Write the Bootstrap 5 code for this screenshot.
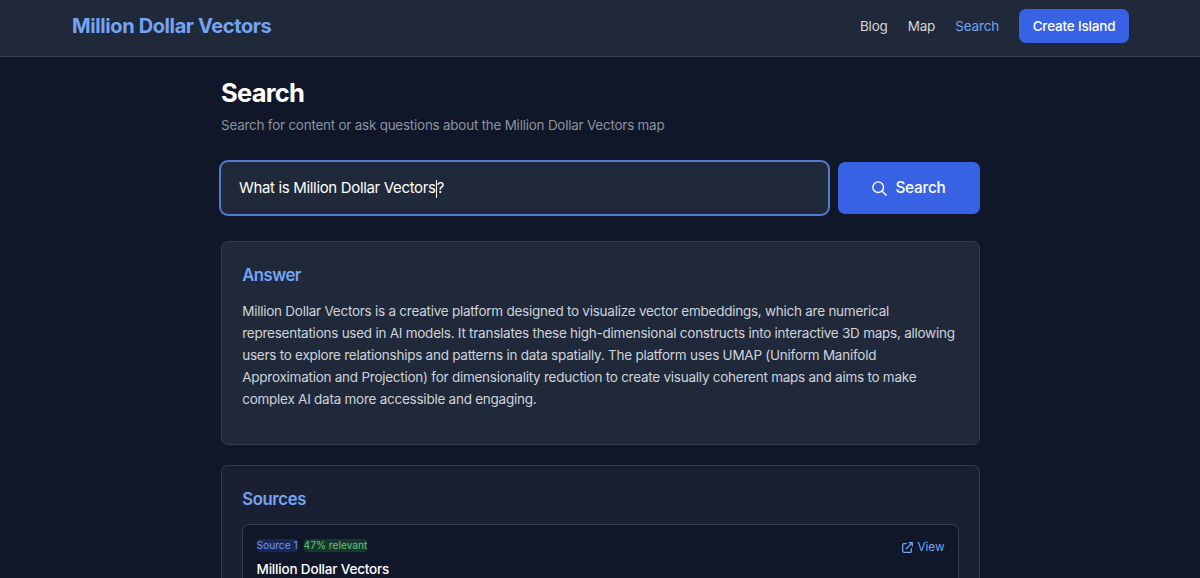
<!DOCTYPE html>
<html lang="en">
<head>
<meta charset="utf-8">
<meta name="viewport" content="width=device-width, initial-scale=1">
<title>Million Dollar Vectors</title>
<link rel="stylesheet" href="https://cdn.jsdelivr.net/npm/bootstrap@5.3.0/dist/css/bootstrap.min.css">
<style>
body{background:#101728;color:#fff;font-family:Inter,"Liberation Sans",sans-serif;height:578px;overflow:hidden;font-size:13.5px}
.topbar{background:#202939;border-bottom:1px solid #374252;height:57px;padding:0 71px 5px 72px}
.brand{font-size:20px;font-weight:700;color:#75a4f4;line-height:30px;letter-spacing:-.39px}
.topbar .nav{gap:20px}
.topbar .nav-link{color:#d1d5db;font-size:13.5px;line-height:20px;padding:0;letter-spacing:-.17px}
.topbar .nav-link.active{color:#75a4f4}
.btn-blue{background:#3762e3;color:#fff;border:0;font-weight:500}
.btn-blue:hover{background:#2c55d0;color:#fff}
.btn-create{width:110px;height:34px;font-size:13.5px;padding:1px 0 0;border-radius:7px;white-space:nowrap;letter-spacing:-.18px}
.page{width:759px}
h1{font-size:25.5px;line-height:32px;font-weight:700;margin:20px 0 6px;letter-spacing:-.75px;padding-left:.5px}
.intro{color:#8b93a3;line-height:20px;margin-bottom:27px;font-size:13.4px;letter-spacing:-.2px;padding-left:.5px}
.query{width:607px;height:52px;background:#202939;border-radius:7px;box-shadow:0 0 0 2px #527bcf;padding:1px 18.5px 0;font-size:15px;white-space:pre;letter-spacing:-.335px}
.caret{width:1px;height:18px;background:#fff}
.btn-search{width:142px;height:52px;border-radius:7px;font-size:15.3px;padding:1px 0 0 1px;letter-spacing:-.2px}
.panel{border:1px solid #343d4d;border-radius:7px;padding:20px}
.answer{background:#202939;height:204px;margin-top:27px}
.sources{background:#1a2031;height:113px;margin-top:20px;border-bottom:0;border-radius:7px 7px 0 0;padding-bottom:0}
h2{font-size:16.7px;line-height:24px;font-weight:600;color:#75a4f4;margin:1px 0 13px;letter-spacing:-.5px;padding-left:.7px}
.sources h2{letter-spacing:-.35px}
.answer p{color:#ced3dc;line-height:22px;white-space:nowrap;margin:0;letter-spacing:-.25px;padding-left:.7px}
.source{background:#101728;border:1px solid #343d4d;border-bottom:0;border-radius:7px 7px 0 0;height:54px;padding:14px 13px 0 14px}
.tag{font-size:10.2px;line-height:13px;border-radius:3px;height:13px;white-space:nowrap}
.tag-blue{background:#182757;color:#6d99ea}
.tag-green{background:#17382f;color:#63c47b}
.tags{gap:6px}
.view{color:#75a4f4;font-size:11.7px;line-height:17px;height:17px;gap:4px;text-decoration:none}
.source-title{font-size:13.5px;line-height:17px;font-weight:500;margin:5px 0 0;letter-spacing:-.18px}
</style>
<script src="https://cdn.jsdelivr.net/npm/bootstrap@5.3.0/dist/js/bootstrap.bundle.min.js"></script>
</head>
<body>
<header class="topbar d-flex align-items-center justify-content-between">
  <a class="brand text-decoration-none" href="#">Million Dollar Vectors</a>
  <nav class="nav align-items-center flex-nowrap">
    <a class="nav-link" href="#">Blog</a>
    <a class="nav-link" href="#">Map</a>
    <a class="nav-link active" href="#">Search</a>
    <a class="btn btn-blue btn-create d-flex align-items-center justify-content-center" href="#">Create Island</a>
  </nav>
</header>
<main class="page mx-auto">
  <h1>Search</h1>
  <p class="intro">Search for content or ask questions about the Million Dollar Vectors map</p>
  <div class="d-flex justify-content-between">
    <div class="query d-flex align-items-center" role="textbox"><span>What is Million Dollar Vectors</span><span class="caret"></span><span>?</span></div>
    <button class="btn btn-blue btn-search d-flex align-items-center justify-content-center gap-2" type="button">
      <svg width="15" height="15" viewBox="0 0 15 15" fill="none" stroke="#fff" stroke-width="1.4" stroke-linecap="round"><circle cx="6.2" cy="6.2" r="5.3"/><path d="M10 10 14.2 14.2"/></svg>
      Search
    </button>
  </div>
  <section class="panel answer">
    <h2>Answer</h2>
    <p>Million Dollar Vectors is a creative platform designed to visualize vector embeddings, which are numerical<br>representations used in AI models. It translates these high-dimensional constructs into interactive 3D maps, allowing<br>users to explore relationships and patterns in data spatially. The platform uses UMAP (Uniform Manifold<br>Approximation and Projection) for dimensionality reduction to create visually coherent maps and aims to make<br>complex AI data more accessible and engaging.</p>
  </section>
  <section class="panel sources">
    <h2>Sources</h2>
    <article class="source">
      <div class="d-flex justify-content-between">
        <div class="tags d-flex"><span class="tag tag-blue">Source 1</span><span class="tag tag-green">47% relevant</span></div>
        <a class="view d-flex align-items-center" href="#"><svg width="11" height="11" viewBox="0 0 11 11" fill="none" stroke="currentColor" stroke-width="1.25" stroke-linecap="round" stroke-linejoin="round"><path d="M4.4 1.6H1.9A1.2 1.2 0 0 0 .7 2.8v6.3a1.2 1.2 0 0 0 1.2 1.2h6.3a1.2 1.2 0 0 0 1.2-1.2V6.6M7 .7h3.3V4M10.3.7 4.2 6.8"/></svg>View</a>
      </div>
      <h3 class="source-title">Million Dollar Vectors</h3>
    </article>
  </section>
</main>
</body>
</html>
